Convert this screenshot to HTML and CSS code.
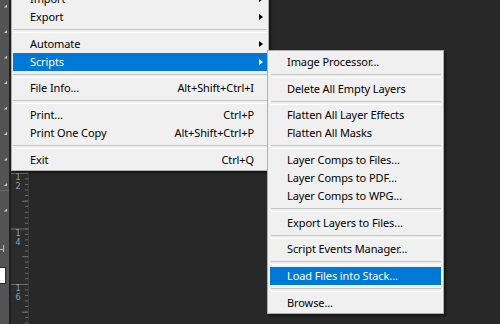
FILE: index.html
```html
<!DOCTYPE html>
<html>
<head>
<meta charset="utf-8">
<link rel="stylesheet" href="styles.css">
</head>
<body>
<div class="app">
  <aside class="tools">
    <div class="tool-list">
      <div class="tool"><i class="corner"></i></div>
      <div class="tool"><i class="corner"></i></div>
      <div class="tool"><i class="corner"></i></div>
      <div class="tool"><i class="corner"></i></div>
      <div class="tool"><i class="corner"></i></div>
      <div class="tool"><i class="corner"></i></div>
      <div class="tool"><i class="corner"></i></div>
      <div class="tool tool-group-end"><i class="corner"></i></div>
      <div class="tool"><i class="corner"></i></div>
    </div>
    <div class="swap-icon"></div>
    <div class="swatch"></div>
  </aside>
  <div class="divider"></div>
  <div class="ruler">
    <span class="ruler-label label-12">1<br>2</span>
    <span class="ruler-label label-14">1<br>4</span>
    <span class="ruler-label label-16">1<br>6</span>
  </div>
  <main class="canvas"></main>
</div>

<div class="menu menu-main">
  <div class="item"><span class="label">Import</span><span class="key"></span><span class="sub"><i class="arrow"></i></span></div>
  <div class="item"><span class="label">Export</span><span class="key"></span><span class="sub"><i class="arrow"></i></span></div>
  <div class="sep"></div>
  <div class="item"><span class="label">Automate</span><span class="key"></span><span class="sub"><i class="arrow"></i></span></div>
  <div class="item active"><span class="label">Scripts</span><span class="key"></span><span class="sub"><i class="arrow"></i></span></div>
  <div class="sep"></div>
  <div class="item"><span class="label">File Info...</span><span class="key">Alt+Shift+Ctrl+I</span><span class="sub"></span></div>
  <div class="sep"></div>
  <div class="item"><span class="label">Print...</span><span class="key">Ctrl+P</span><span class="sub"></span></div>
  <div class="item"><span class="label">Print One Copy</span><span class="key">Alt+Shift+Ctrl+P</span><span class="sub"></span></div>
  <div class="sep"></div>
  <div class="item"><span class="label">Exit</span><span class="key">Ctrl+Q</span><span class="sub"></span></div>
</div>

<div class="menu menu-sub">
  <div class="item"><span class="label">Image Processor...</span></div>
  <div class="sep"></div>
  <div class="item"><span class="label">Delete All Empty Layers</span></div>
  <div class="sep"></div>
  <div class="item"><span class="label">Flatten All Layer Effects</span></div>
  <div class="item"><span class="label">Flatten All Masks</span></div>
  <div class="sep"></div>
  <div class="item"><span class="label">Layer Comps to Files...</span></div>
  <div class="item"><span class="label">Layer Comps to PDF...</span></div>
  <div class="item"><span class="label">Layer Comps to WPG...</span></div>
  <div class="sep"></div>
  <div class="item"><span class="label">Export Layers to Files...</span></div>
  <div class="sep"></div>
  <div class="item"><span class="label">Script Events Manager...</span></div>
  <div class="sep"></div>
  <div class="item active"><span class="label">Load Files into Stack...</span></div>
  <div class="sep"></div>
  <div class="item"><span class="label">Browse...</span></div>
</div>
</body>
</html>
```

FILE: styles.css
```css
* { box-sizing: border-box; }

html, body {
  margin: 0;
  padding: 0;
  width: 500px;
  height: 324px;
  overflow: hidden;
  background: #282828;
}

.app {
  display: flex;
  height: 324px;
}

/* left tool panel */
.tools {
  width: 9px;
  flex: none;
  background: #535353;
  display: flex;
  flex-direction: column;
  align-items: flex-start;
}

.tool-list {
  margin-top: -6.75px;
  width: 9px;
}

.tool {
  height: 25.5px;
  display: flex;
  align-items: center;
  justify-content: flex-end;
  padding-right: 2px;
}

.tool-group-end {
  background: linear-gradient(to bottom, transparent 0 18.5px, #6a6a6a 18.5px 19.5px, transparent 19.5px);
}

.corner {
  display: block;
  width: 3px;
  height: 3px;
  background: #cfcfcf;
  clip-path: polygon(100% 0, 100% 100%, 0 100%);
}

.swap-icon {
  margin-top: 22px;
  width: 4px;
  height: 7px;
  border-right: 1px solid #bdbdbd;
  background: linear-gradient(to bottom, transparent 0 4px, #bdbdbd 4px 5px, transparent 5px);
}

.swatch {
  margin-top: 15px;
  width: 6px;
  height: 17px;
  background: #ffffff;
  border: 1px solid #2a2a2a;
  border-left: none;
}

.divider {
  width: 2px;
  flex: none;
  background: #1e1e1e;
}

/* vertical ruler */
.ruler {
  position: relative;
  width: 18px;
  flex: none;
  background-color: #2c2c2c;
  border-right: 1px solid #3c3c3c;
  background-image:
    linear-gradient(to bottom, #6e6e6e 0 1px, transparent 1px),
    linear-gradient(to bottom, #6e6e6e 0 1px, transparent 1px),
    linear-gradient(to bottom, #6e6e6e 0 1px, transparent 1px);
  background-size:
    17px 55.5px,
    6px 55.5px,
    3px 5.55px;
  background-repeat: repeat-y;
  background-position:
    0 6.5px,
    right 0 top 34.25px,
    right 0 top 0.95px;
}

.ruler-label {
  position: absolute;
  left: 4px;
  width: 6px;
  font-family: "DejaVu Sans", sans-serif;
  font-size: 8px;
  line-height: 8.5px;
  color: #93a2b2;
  text-align: center;
}

.label-12 { top: 174px; }
.label-14 { top: 230px; }
.label-16 { top: 285px; }

.canvas {
  flex: 1;
  background: #282828;
}

/* menus */
.menu {
  position: absolute;
  background: #f0f0f0;
  border: 1px solid #b0b0b0;
  box-shadow: 2px 2px 2px rgba(0, 0, 0, 0.45);
  font-family: "Noto Sans", "Open Sans", sans-serif;
  font-size: 11px;
  letter-spacing: -0.1px;
  color: #000;
}

.menu-main {
  left: 11px;
  top: -13px;
  width: 258px;
  padding: 2px 1px 1px;
}

.menu-sub {
  left: 267px;
  top: 50px;
  width: 177px;
  padding: 2px 2px 1px;
}

.item {
  display: flex;
  align-items: center;
  height: 18px;
  line-height: 18px;
  padding-left: 17px;
  white-space: nowrap;
}

.item.active {
  background: #0078d7;
  color: #ffffff;
}

.label {
  flex: 1;
}

.key {
  text-align: right;
}

.sub {
  width: 13px;
  flex: none;
  display: flex;
  align-items: center;
  padding-left: 5px;
}

.arrow {
  display: block;
  width: 0;
  height: 0;
  border-top: 3.5px solid transparent;
  border-bottom: 3.5px solid transparent;
  border-left: 4px solid #000;
}

.item.active .arrow {
  border-left-color: #ffffff;
}

.sep {
  height: 8.7px;
  padding-top: 3px;
}

.sep::before {
  content: "";
  display: block;
  height: 2px;
  border-top: 1px solid #c6c6c6;
  border-bottom: 1px solid #ffffff;
}

.menu-sub .sep {
  padding-left: 1px;
}
```
